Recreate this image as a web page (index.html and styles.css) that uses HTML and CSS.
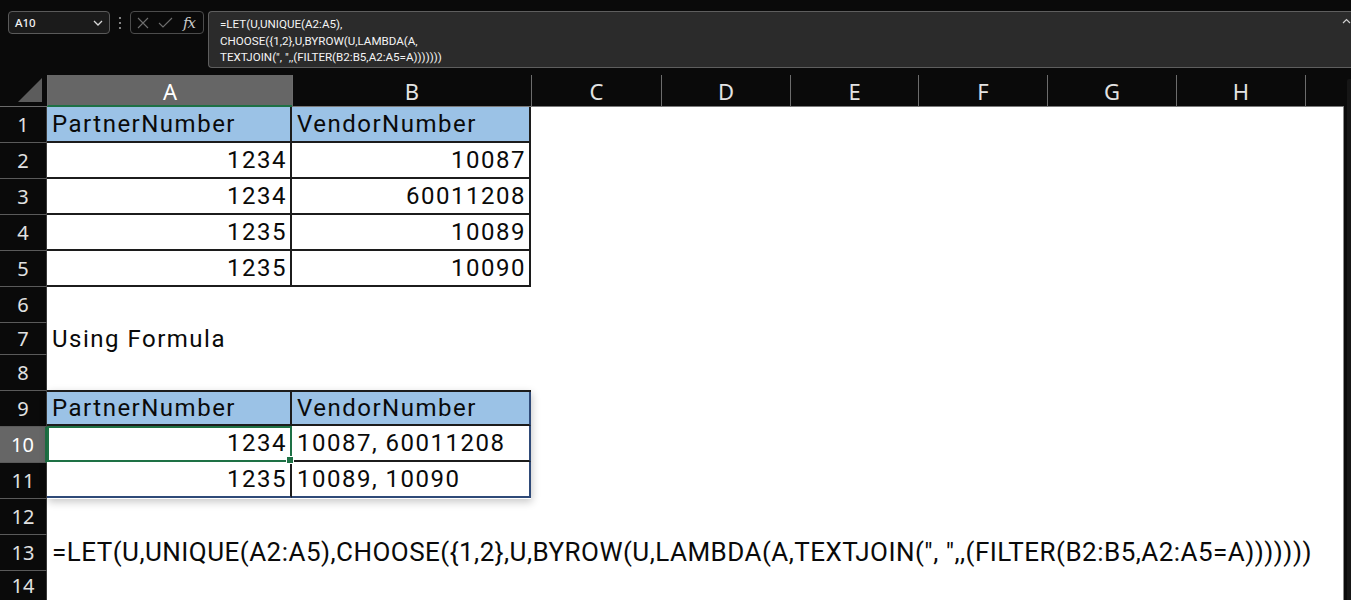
FILE: index.html
```html
<!DOCTYPE html>
<html>
<head>
<meta charset="utf-8">
<link rel="stylesheet" href="styles.css">
</head>
<body>
<div class="topbar">
  <div class="namebox"><span>A10</span>
    <svg width="10" height="6" viewBox="0 0 10 6"><path d="M1 1l4 4 4-4" stroke="#d8d8d8" stroke-width="1.3" fill="none"/></svg>
  </div>
  <div class="dots"><svg width="4" height="14" viewBox="0 0 4 14"><circle cx="2" cy="2" r="1.1" fill="#a0a0a0"/><circle cx="2" cy="7" r="1.1" fill="#a0a0a0"/><circle cx="2" cy="12" r="1.1" fill="#a0a0a0"/></svg></div>
  <div class="fxbox">
    <svg class="ico" width="12" height="12" viewBox="0 0 12 12"><path d="M1 1L11 11M11 1L1 11" stroke="#6e6e6e" stroke-width="1.1" fill="none"/></svg>
    <svg class="ico" width="15" height="11" viewBox="0 0 15 11"><path d="M1 6l4 4 9-9" stroke="#6e6e6e" stroke-width="1.1" fill="none"/></svg>
    <span class="fx">fx</span>
  </div>
  <div class="formula">
    <div>=LET(U,UNIQUE(A2:A5),</div>
    <div>CHOOSE({1,2},U,BYROW(U,LAMBDA(A,</div>
    <div>TEXTJOIN(", ",,(FILTER(B2:B5,A2:A5=A)))))))</div>
    <svg class="caret" width="9" height="6" viewBox="0 0 9 6"><path d="M1 5l3.5-3.5L8 5" stroke="#d0d0d0" stroke-width="1.2" fill="none"/></svg>
  </div>
</div>

<div class="sheet">
  <div class="corner"><svg width="26" height="26" viewBox="0 0 26 26"><path d="M24 1V25H0Z" fill="#5c5c5c"/></svg></div>
  <div class="ch sel">A</div>
  <div class="ch">B</div>
  <div class="ch">C</div>
  <div class="ch">D</div>
  <div class="ch">E</div>
  <div class="ch">F</div>
  <div class="ch">G</div>
  <div class="ch">H</div>
  <div class="ch"></div>
  <div class="scrollcol"><div class="scrollbar"></div></div>

  <div class="rh r1">1</div>
  <div class="rh r2">2</div>
  <div class="rh r3">3</div>
  <div class="rh r4">4</div>
  <div class="rh r5">5</div>
  <div class="rh r6">6</div>
  <div class="rh r7">7</div>
  <div class="rh r8">8</div>
  <div class="rh r9">9</div>
  <div class="rh r10 sel">10</div>
  <div class="rh r11">11</div>
  <div class="rh r12">12</div>
  <div class="rh r13">13</div>
  <div class="rh r14">14</div>

  <div class="body"></div>

  <div class="table t1">
    <div class="c hd">PartnerNumber</div><div class="c hd">VendorNumber</div>
    <div class="c num">1234</div><div class="c num">10087</div>
    <div class="c num">1234</div><div class="c num">60011208</div>
    <div class="c num">1235</div><div class="c num">10089</div>
    <div class="c num">1235</div><div class="c num">10090</div>
  </div>

  <div class="label">Using Formula</div>

  <div class="table t2">
    <div class="c hd">PartnerNumber</div><div class="c hd lastc">VendorNumber</div>
    <div class="c num sel">1234</div><div class="c lastc">10087, 60011208</div>
    <div class="c num lastr">1235</div><div class="c lastc lastr">10089, 10090</div>
  </div>

  <div class="ftext">=LET(U,UNIQUE(A2:A5),CHOOSE({1,2},U,BYROW(U,LAMBDA(A,TEXTJOIN(", ",,(FILTER(B2:B5,A2:A5=A)))))))</div>
</div>
</body>
</html>
```

FILE: styles.css
```css
* { box-sizing: border-box; }

html, body {
  margin: 0;
  padding: 0;
  background: #0a0a0a;
}

body {
  width: 1351px;
  height: 600px;
  overflow: hidden;
  font-family: Roboto, "Noto Sans", sans-serif;
}

/* ---------- top bar ---------- */
.topbar {
  height: 75px;
  display: flex;
  align-items: flex-start;
  padding: 11px 0 0 8px;
}

.namebox {
  width: 102px;
  height: 23px;
  border: 1px solid #5a5a5a;
  border-radius: 4px;
  background: #1b1b1b;
  display: flex;
  align-items: center;
  justify-content: space-between;
  padding: 0 6px 0 6px;
  color: #f2f2f2;
  font-family: "Noto Sans", sans-serif;
  font-size: 11.5px;
  font-weight: 500;
}

.dots {
  width: 20px;
  height: 23px;
  display: flex;
  align-items: center;
  justify-content: center;
}

.fxbox {
  width: 74px;
  height: 23px;
  border: 1px solid #4c4c4c;
  border-radius: 4px;
  display: flex;
  align-items: center;
  padding: 0 0 0 6px;
  gap: 9px;
}

.fx {
  font-family: "DejaVu Serif", "Liberation Serif", serif;
  font-style: italic;
  font-size: 15px;
  color: #c9c9c9;
  letter-spacing: -1px;
  margin-left: 1px;
}

.formula {
  position: relative;
  margin-left: 4px;
  flex: 1;
  height: 57px;
  border: 1px solid #5e5e5e;
  border-right: none;
  border-radius: 4px 0 0 4px;
  background: #2b2b2b;
  padding: 4px 0 0 11px;
  color: #f4f4f4;
  font-family: Roboto, sans-serif;
  font-size: 11.6px;
  line-height: 16.6px;
}

.caret {
  position: absolute;
  right: 0;
  top: 6px;
}

/* ---------- sheet ---------- */
.sheet {
  display: grid;
  grid-template-columns: 47px 245px 239px 130px 129px 128px 129px 129px 129px 39px 7px;
  grid-template-rows: 32px repeat(6, 36px) 32px repeat(6, 36px) 29px;
}

.corner {
  grid-row: 1;
  grid-column: 1;
  display: flex;
  align-items: flex-end;
  justify-content: flex-end;
  padding: 0 3px 3px 0;
  border-bottom: 1px solid #6a6a6a;
}

.ch {
  border-left: 1px solid #6c6c6c;
  border-bottom: 1px solid #7a7a7a;
  color: #e3e3e3;
  font-family: "Noto Sans", sans-serif;
  font-size: 22px;
  display: flex;
  align-items: center;
  justify-content: center;
  padding-top: 1px;
}

.ch.sel {
  background: #666666;
  color: #ffffff;
  border-bottom: 2px solid #1e7145;
}

.scrollcol {
  grid-row: 1 / 16;
  grid-column: 11;
  display: flex;
  justify-content: flex-end;
  padding-top: 4px;
}

.scrollbar {
  width: 4px;
  height: 100%;
  background: #161616;
  border-radius: 2px 0 0 0;
}

.rh {
  grid-column: 1;
  border-bottom: 1px solid #5a5a5a;
  border-right: 1px solid #3a3a3a;
  color: #e1e1e1;
  font-family: "Noto Sans", sans-serif;
  font-size: 20px;
  display: flex;
  align-items: center;
  justify-content: center;
}

.r14 { border-bottom: none; }

.rh.sel {
  background: #666666;
  color: #ffffff;
  border-right: 2px solid #1e7145;
}

.body {
  grid-row: 2 / 16;
  grid-column: 2 / 11;
  background: #ffffff;
  border-right: 1px solid #8a8a8a;
}

/* ---------- tables ---------- */
.table {
  display: grid;
  grid-template-columns: 245px 239px;
  position: relative;
}

.t1 {
  grid-row: 2 / 7;
  grid-column: 2 / 4;
  grid-auto-rows: 36px;
}

.t2 {
  grid-row: 10 / 13;
  grid-column: 2 / 4;
  grid-template-rows: 34px 36px 36px;
  border-top: 2px solid #1c1c1c;
  margin-top: -1px;
  box-shadow: 1px 3px 8px rgba(0, 0, 0, 0.22);
}

.c {
  border-right: 2px solid #1c1c1c;
  border-bottom: 2px solid #1c1c1c;
  font-family: Roboto, sans-serif;
  font-size: 24px;
  letter-spacing: 1.5px;
  color: #0a0a0a;
  padding: 0 3px 0 5px;
  display: flex;
  align-items: center;
  white-space: nowrap;
}

.c.hd { background: #9bc2e6; }
.c.num { justify-content: flex-end; }

.t2 .lastc { border-right-color: #2f4a78; }
.t2 .lastr { border-bottom-color: #2f4a78; }

.c.sel {
  position: relative;
  z-index: 1;
  outline: 2px solid #1e7145;
  outline-offset: -2px;
}

.c.sel::after {
  content: "";
  position: absolute;
  right: -4px;
  bottom: -4px;
  width: 6px;
  height: 6px;
  background: #1e7145;
  border: 1px solid #ffffff;
}

.label {
  grid-row: 8;
  grid-column: 2 / 5;
  padding-left: 5px;
  display: flex;
  align-items: center;
  font-size: 24px;
  letter-spacing: 1.5px;
  color: #0a0a0a;
}

.ftext {
  grid-row: 14;
  grid-column: 2 / 11;
  padding-left: 5px;
  display: flex;
  align-items: center;
  white-space: nowrap;
  font-size: 26px;
  letter-spacing: 0.47px;
  color: #0a0a0a;
  padding-bottom: 2px;
}
```
